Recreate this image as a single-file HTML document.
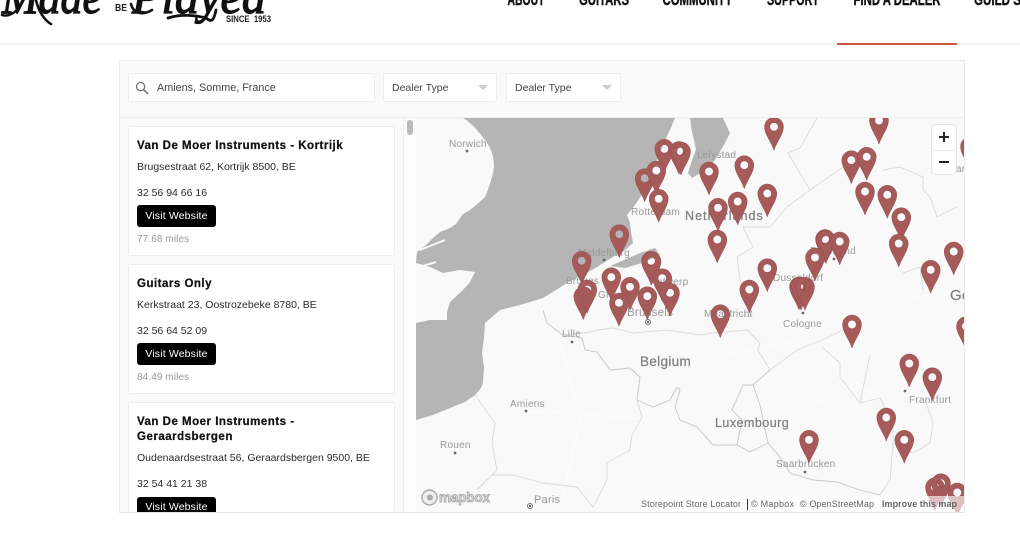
<!DOCTYPE html>
<html><head><meta charset="utf-8"><title>Find a Dealer</title>
<style>
*{box-sizing:border-box}
html,body{margin:0;padding:0;width:1020px;height:540px;overflow:hidden;background:#fff;font-family:"Liberation Sans",sans-serif}
.a{position:absolute;white-space:nowrap}
.box{position:absolute;background:#fff;border:1px solid #eee;border-radius:2px}
.t{position:absolute;left:137px;font-weight:700;font-size:11.5px;line-height:15px;letter-spacing:.5px;color:#111;white-space:nowrap;-webkit-text-stroke:.25px #111}
.l{position:absolute;left:137px;font-size:10.5px;line-height:14px;color:#2a2a2a;white-space:nowrap}
.m{position:absolute;left:137px;font-size:10px;line-height:14px;color:#999;white-space:nowrap;letter-spacing:.1px}
.b{position:absolute;left:137px;width:79px;height:22px;background:#000;border-radius:3px;color:#fff;font-size:10.5px;line-height:22px;text-align:center;letter-spacing:.15px}
.card{position:absolute;left:128px;width:267px;background:#fff;border:1px solid #eee;border-radius:2px}
</style></head><body>

<svg class="a" style="left:0;top:0" width="1020" height="44" viewBox="0 0 1020 44">
<g font-family="Liberation Serif,serif" font-style="italic" fill="#111" stroke="#111" stroke-width="1.2">
<text x="2" y="13" font-size="50" textLength="100" lengthAdjust="spacingAndGlyphs">Made</text>
<text x="132" y="13" font-size="50" textLength="134" lengthAdjust="spacingAndGlyphs">Played</text>
</g>
<g fill="none" stroke="#111" stroke-linecap="round">
<path d="M2 15C8 17 14 13 18 9" stroke-width="2.4"/>
<path d="M36 0C38 10 44 20 51 24" stroke-width="2.6"/>
<path d="M131 4C133 13 142 16 152 10" stroke-width="2.6"/>
<path d="M168 18C180 14 195 15 206 18C212 23 214 20 216 10" stroke-width="2.8"/>
</g>
<text x="115" y="11" font-family="Liberation Sans,sans-serif" font-weight="700" font-size="10" textLength="12" lengthAdjust="spacingAndGlyphs" fill="#222">BE</text>
<text x="226" y="22" font-family="Liberation Sans,sans-serif" font-weight="700" font-size="9.5" textLength="45" lengthAdjust="spacingAndGlyphs" fill="#222" xml:space="preserve">SINCE  1953</text>
<g font-family="Liberation Sans,sans-serif" font-weight="700" font-size="17" fill="#111" stroke="#111" stroke-width=".4">
<text x="507.5" y="5" textLength="37" lengthAdjust="spacingAndGlyphs">ABOUT</text>
<text x="579" y="5" textLength="50" lengthAdjust="spacingAndGlyphs">GUITARS</text>
<text x="662.5" y="5" textLength="70" lengthAdjust="spacingAndGlyphs">COMMUNITY</text>
<text x="767" y="5" textLength="52" lengthAdjust="spacingAndGlyphs">SUPPORT</text>
<text x="853.5" y="5" textLength="87" lengthAdjust="spacingAndGlyphs">FIND A DEALER</text>
<text x="974" y="5" textLength="72" lengthAdjust="spacingAndGlyphs">GUILD SHOP</text>
</g>
</svg>

<div class="a" style="left:0;top:43px;width:1020px;height:2px;background:#f0efed"></div>
<div class="a" style="left:837px;top:43px;width:120px;height:2px;background:#c9583f"></div>

<div class="a" style="left:119px;top:60px;width:846px;height:453px;background:#fafafa;border:1px solid #ebebeb"></div>

<div class="box" style="left:128px;top:73px;width:247px;height:29px"></div>
<svg class="a" style="left:135px;top:81px" width="14" height="14" viewBox="0 0 14 14"><circle cx="5.6" cy="5.6" r="4.1" fill="none" stroke="#777" stroke-width="1.3"/><path d="M8.6 8.6L13 13" stroke="#777" stroke-width="1.6"/></svg>
<div class="a" style="left:157px;top:81px;font-size:10.8px;line-height:15px;color:#444">Amiens, Somme, France</div>

<div class="box" style="left:383px;top:73px;width:114px;height:29px"></div>
<div class="a" style="left:392px;top:81px;font-size:10.5px;line-height:15px;color:#444">Dealer Type</div>
<div class="a" style="left:478px;top:85px;width:0;height:0;border-left:5px solid transparent;border-right:5px solid transparent;border-top:5px solid #ccc"></div>
<div class="box" style="left:506px;top:73px;width:115px;height:29px"></div>
<div class="a" style="left:515px;top:81px;font-size:10.5px;line-height:15px;color:#444">Dealer Type</div>
<div class="a" style="left:602px;top:85px;width:0;height:0;border-left:5px solid transparent;border-right:5px solid transparent;border-top:5px solid #ccc"></div>

<div class="a" style="left:120px;top:117px;width:844px;height:1px;background:#eee"></div>
<div class="a" style="left:120px;top:118px;width:283px;height:394px;background:#fafafa"></div>
<div class="a" style="left:403px;top:118px;width:13px;height:394px;background:#fcfcfc;border-left:1px solid #ececec"></div>
<div class="a" style="left:407px;top:120px;width:6px;height:15px;border-radius:3px;background:#bbb"></div>

<div class="card" style="top:126px;height:130px"></div>
<div class="t" style="top:139px">Van De Moer Instruments - Kortrijk</div>
<div class="l" style="top:160px">Brugsestraat 62, Kortrijk 8500, BE</div>
<div class="l" style="top:186px">32 56 94 66 16</div>
<div class="b" style="top:205px">Visit Website</div>
<div class="m" style="top:232.5px">77.68 miles</div>

<div class="card" style="top:264px;height:130px"></div>
<div class="t" style="top:277px">Guitars Only</div>
<div class="l" style="top:298px">Kerkstraat 23, Oostrozebeke 8780, BE</div>
<div class="l" style="top:324px">32 56 64 52 09</div>
<div class="b" style="top:343px">Visit Website</div>
<div class="m" style="top:370.5px">84.49 miles</div>

<div class="card" style="top:402px;height:110px;border-bottom:0"></div>
<div class="t" style="top:415px">Van De Moer Instruments -</div>
<div class="t" style="top:430px">Geraardsbergen</div>
<div class="l" style="top:451px">Oudenaardsestraat 56, Geraardsbergen 9500, BE</div>
<div class="l" style="top:477px">32 54 41 21 38</div>
<div class="a" style="left:137px;top:497px;width:79px;height:15px;background:#000;border-radius:3px 3px 0 0;overflow:hidden;color:#fff;font-size:10.5px;line-height:20px;text-align:center;letter-spacing:.15px">Visit Website</div>
<div class="a" style="left:120px;top:512px;width:844px;height:1px;background:#e8e8e8"></div>

<svg class="a" style="left:416px;top:118px" width="548" height="394" viewBox="416 118 548 394">
<defs>
<path id="p" fill-rule="evenodd" d="M0 33C-3 24-9.5 17-9.5 9.5A9.5 9.5 0 0 1 9.5 9.5C9.5 17 3 24 0 33ZM0 5.3A4.2 4.2 0 1 0 0 13.7A4.2 4.2 0 1 0 0 5.3Z"/>
</defs>
<rect x="416" y="118" width="548" height="394" fill="#f9f9f9"/>
<g fill="none" stroke="#fff" stroke-width="1.4" opacity=".55">
<path d="M500 410L540 412L640 418L720 470M560 340L580 420L560 510M640 420L700 360L800 340L880 400M780 200L830 250L900 300L960 290M750 440L820 400L900 440L960 420M420 470L500 450L560 410"/>
</g>
<path fill="#b5b5b5" d="M463 118C472 123 480 133 487 143C492 150 494 158 494 167C492 180 488 190 485 197C478 204 472 208 470 210L463 214L456 224L450 228L440 232L433 238L425 246L417 252L416 263L430 267L443 273L460 270L475 272L470 282L463 290L450 302L447 312L447 320L430 320L416 323L416 420L433 415L450 408L465 402L475 395L481 388L483 382L484 368L482 353L484 338L485 323L500 310L520 305L543 298L556 290L567 283L585 274L597 267L613 257L625 250L633 243L631 232L630 223L627 215L635 205L643 193L650 175L660 153L666 138L670 130L675 118Z"/>
<path fill="#b5b5b5" d="M690 118L723 118L730 133L725 143L715 160L705 170L692 178L688 173L692 160L696 150L694 140L692 132ZM640 253L655 248L660 255L645 262L625 268L610 266Z"/>
<path fill="none" stroke="#f9f9f9" stroke-width="2" d="M416 268L436 262M420 250L445 240M440 225L470 205"/>
<g fill="none" stroke="#c6c6c6" stroke-width=".9">
<path d="M543 310L547 323L563 335L582 338L585 350L597 352L610 370L630 368L640 377L637 400L653 407L670 400L677 387L680 390L675 407L680 420L697 427L713 445L737 445L750 452L768 443L780 457L790 473L813 480L837 482L860 490L880 495"/>
<path d="M737 445L742 420L732 410L743 385L753 385L770 370"/>
<path d="M753 385L760 405L768 443"/>
</g>
<g fill="none" stroke="#dadada" stroke-width=".9">
<path d="M880 495L890 480L893 443L893 423L880 398L860 403L840 377L840 363L823 348"/>
<path d="M770 370L797 350L827 338L843 330L860 330"/>
<path d="M563 335L590 332L597 330L613 328L633 333L667 330L700 335L713 333L747 330L760 343L758 350L770 370"/>
<path d="M730 310L750 317L752 307L740 280L737 257L753 247L743 227L770 227L787 207L810 190L788 153L800 148L817 118"/>
<path d="M810 190L843 167"/>
<path d="M883 170L900 167L923 177L923 190L930 197L937 217L957 207"/>
<path d="M903 273L920 267L923 290"/>
<path d="M475 395L495 423L492 443L497 470L492 475L513 475L543 483L577 487L593 507L607 480L607 463L630 450L632 435L642 417L637 400"/>
<path d="M477 490L492 475M913 453L930 443L933 423L925 400M893 443L913 453M860 403L870 355"/>
</g>
<g font-family="Liberation Sans,sans-serif" fill="#999" font-size="10" letter-spacing=".25">
<text x="449" y="147">Norwich</text><text x="631" y="215">Rotterdam</text><text x="697" y="158">Lelystad</text>
<text x="578" y="256">Middelburg</text><text x="566" y="284">Bruges</text><text x="598" y="298">Ghent</text><text x="650" y="285">Antwerp</text>
<text x="627" y="316" font-size="11.5">Brussels</text><text x="562" y="337">Lille</text><text x="510" y="407">Amiens</text><text x="440" y="448">Rouen</text>
<text x="534" y="503" font-size="11">Paris</text><text x="776" y="467">Saarbrücken</text><text x="909" y="403">Frankfurt</text>
<text x="783" y="327">Cologne</text><text x="704" y="317">Maastricht</text><text x="773" y="281">Dusseldorf</text><text x="810" y="254">Dortmund</text>
<text x="956" y="172">ar</text>
<g fill="#808080" stroke="#808080" stroke-width=".25" font-size="12.5"><text x="685" y="220" textLength="78">Netherlands</text><text x="640" y="366" font-size="13.5" textLength="51">Belgium</text><text x="715" y="427" textLength="74">Luxembourg</text><text x="950" y="300" font-size="15">Ge</text></g>
</g>
<g fill="#666"><circle cx="467" cy="151" r="1.4"/><circle cx="604" cy="260" r="1.4"/><circle cx="572" cy="342" r="1.4"/><circle cx="526" cy="411" r="1.4"/><circle cx="455" cy="453" r="1.4"/><circle cx="805" cy="472" r="1.4"/><circle cx="905" cy="391" r="1.4"/><circle cx="803" cy="313" r="1.4"/><circle cx="834" cy="259" r="1.4"/><circle cx="530" cy="506" r="2.5" fill="none" stroke="#777"/><circle cx="530" cy="506" r="1.2"/><circle cx="648" cy="322" r="2.5" fill="none" stroke="#777"/><circle cx="648" cy="322" r="1.2"/></g>
<g fill="#a65a5a" stroke="#8c4747" stroke-width=".4">
<use href="#p" x="664.3" y="139.3"/><use href="#p" x="679" y="141.5"/><use href="#p" x="681" y="142"/><use href="#p" x="644.7" y="168.7"/><use href="#p" x="656.3" y="161"/><use href="#p" x="658.7" y="189.3"/><use href="#p" x="619.3" y="224.7"/><use href="#p" x="581.7" y="251.3"/><use href="#p" x="651" y="251.3"/><use href="#p" x="651.5" y="252"/><use href="#p" x="611.3" y="267.7"/><use href="#p" x="662.3" y="268.7"/><use href="#p" x="583.3" y="286.7"/><use href="#p" x="587.3" y="280"/><use href="#p" x="630" y="277.3"/><use href="#p" x="670" y="283.3"/><use href="#p" x="647.3" y="286.7"/><use href="#p" x="619" y="293.3"/>
<use href="#p" x="774" y="117.3"/><use href="#p" x="879" y="111"/><use href="#p" x="851.3" y="150.7"/><use href="#p" x="866.7" y="147.3"/><use href="#p" x="744.3" y="155.7"/><use href="#p" x="709" y="162"/><use href="#p" x="865" y="182"/><use href="#p" x="767.3" y="184"/><use href="#p" x="887.3" y="185.3"/><use href="#p" x="737.7" y="192"/><use href="#p" x="718" y="198.3"/><use href="#p" x="901.3" y="207.7"/><use href="#p" x="717.3" y="230"/><use href="#p" x="898.7" y="234"/><use href="#p" x="825" y="229.5"/><use href="#p" x="826" y="230.5"/><use href="#p" x="839.7" y="232"/><use href="#p" x="953.7" y="242"/><use href="#p" x="815" y="248"/><use href="#p" x="767.3" y="258.7"/><use href="#p" x="930.7" y="260.3"/><use href="#p" x="799" y="277"/><use href="#p" x="801" y="277.3"/><use href="#p" x="805" y="277.3"/><use href="#p" x="749.3" y="280"/><use href="#p" x="720.3" y="304.7"/><use href="#p" x="970" y="137"/><use href="#p" x="852" y="315"/><use href="#p" x="966" y="316.7"/><use href="#p" x="909.3" y="354"/><use href="#p" x="932.3" y="367.7"/><use href="#p" x="886.3" y="408"/><use href="#p" x="904.3" y="430.3"/><use href="#p" x="809" y="430.3"/><use href="#p" x="935" y="477.7"/><use href="#p" x="941" y="473.7"/><use href="#p" x="957.3" y="483"/>
</g>
<rect x="640" y="496" width="325" height="16" fill="#fff" fill-opacity=".62"/>
<g font-family="Liberation Sans,sans-serif" font-size="9" fill="#666">
<text x="641" y="507" textLength="100">Storepoint Store Locator</text>
<rect x="747" y="499" width="1" height="11" fill="#333"/>
<text x="751" y="507" textLength="43">© Mapbox</text>
<text x="800" y="507" textLength="74">© OpenStreetMap</text>
<text x="882" y="507" font-weight="700" textLength="75">Improve this map</text>
</g>
<g>
<circle cx="429.5" cy="497.5" r="7.5" fill="#eee" stroke="#aaa" stroke-width="1.4"/>
<circle cx="430" cy="497.5" r="3" fill="#aaa"/>
<text x="439" y="502" font-family="Liberation Sans,sans-serif" font-weight="700" font-size="13.5" textLength="51" fill="#ddd" stroke="#a5a5a5" stroke-width=".8">mapbox</text>
</g>
</svg>

<div class="a" style="left:932px;top:125px;width:24px;height:49px;background:#fff;border-radius:4px;box-shadow:0 0 0 1px #e4e4e4"></div>
<div class="a" style="left:932px;top:150px;width:24px;height:1px;background:#e8e8e8"></div>
<div class="a" style="left:939px;top:136px;width:10px;height:2.4px;background:#222"></div>
<div class="a" style="left:942.8px;top:132px;width:2.4px;height:10px;background:#222"></div>
<div class="a" style="left:939px;top:161px;width:10px;height:2.4px;background:#222"></div>

</body></html>
